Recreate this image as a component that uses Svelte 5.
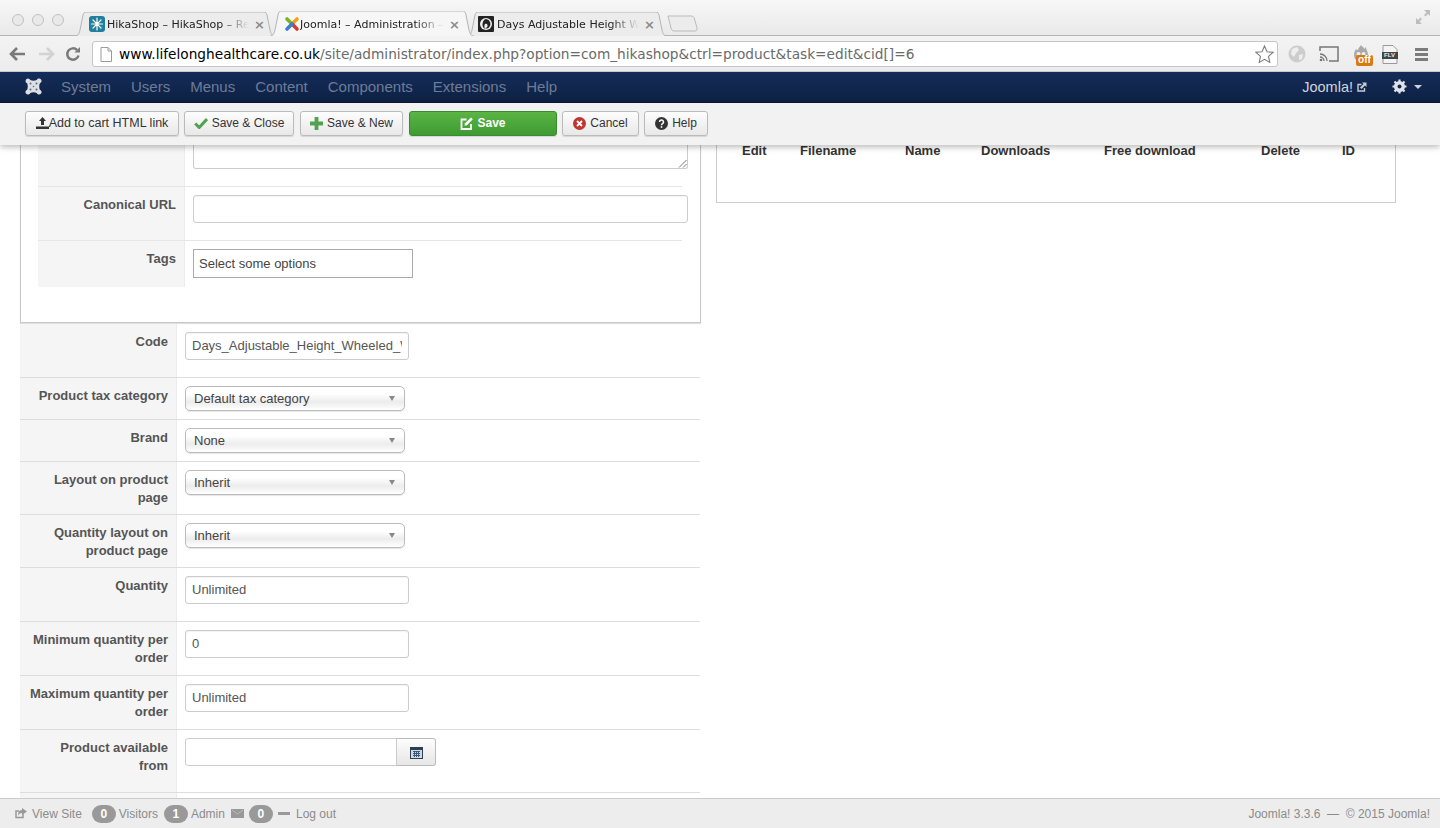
<script lang="ts">
  const navItems = ["System", "Users", "Menus", "Content", "Components", "Extensions", "Help"];

  const innerRows = [
    { label: "", kind: "textarea" },
    { label: "Canonical URL", kind: "text" },
    { label: "Tags", kind: "tags" },
  ];

  const rows = [
    { label: "Code", kind: "input", value: "Days_Adjustable_Height_Wheeled_Walker", cls: "h54" },
    { label: "Product tax category", kind: "select", value: "Default tax category", cls: "h42" },
    { label: "Brand", kind: "select", value: "None", cls: "h42" },
    { label: "Layout on product page", kind: "select", value: "Inherit", cls: "h53" },
    { label: "Quantity layout on product page", kind: "select", value: "Inherit", cls: "h53" },
    { label: "Quantity", kind: "input", value: "Unlimited", cls: "h54" },
    { label: "Minimum quantity per order", kind: "input", value: "0", cls: "h54" },
    { label: "Maximum quantity per order", kind: "input", value: "Unlimited", cls: "h54" },
    { label: "Product available from", kind: "date", value: "", cls: "h63" },
    { label: "", kind: "none", value: "", cls: "h54" },
  ];

  const columns = ["Edit", "Filename", "Name", "Downloads", "Free download", "Delete", "ID"];

  const tabPath = "M0 24 C3 24 4 22 5 18 L8 3 C8.500 1 9.500 0 11 0 L189 0 C190.500 0 191.500 1 192 3 L195 18 C196 22 197 24 200 24";
</script>

<div class="app">
  <header class="browser">
    <div class="tabstrip">
      <div class="lights"><i></i><i></i><i></i></div>

      <div class="tab first">
        <svg class="tab-shape" viewBox="0 0 200 24" preserveAspectRatio="none"><path d={tabPath} fill="#ececec" stroke="#b4b4b4" vector-effect="non-scaling-stroke"/></svg>
        <svg class="favicon" viewBox="0 0 16 16">
          <rect width="16" height="16" rx="3" fill="#1f7f9c"/>
          <path d="M8 2v12M2.500 8h11M4 4l8 8M12 4l-8 8" stroke="#fff" stroke-width="1.200" stroke-linecap="round"/>
        </svg>
        <span class="tab-title">HikaShop – HikaShop – Report</span>
        <span class="tab-x">×</span>
      </div>

      <div class="tab active">
        <svg class="tab-shape" viewBox="0 0 200 24" preserveAspectRatio="none"><path d={tabPath} fill="#f6f6f6" stroke="#b4b4b4" vector-effect="non-scaling-stroke"/></svg>
        <svg class="favicon" viewBox="0 0 16 16">
          <path d="M3 3l5 5" stroke="#7ab51d" stroke-width="3.600" stroke-linecap="round"/>
          <path d="M13 3l-5 5" stroke="#f2a01d" stroke-width="3.600" stroke-linecap="round"/>
          <path d="M13 13l-5-5" stroke="#d63b2f" stroke-width="3.600" stroke-linecap="round"/>
          <path d="M3 13l5-5" stroke="#3a7fd1" stroke-width="3.600" stroke-linecap="round"/>
        </svg>
        <span class="tab-title">Joomla! – Administration – Hika</span>
        <span class="tab-x">×</span>
      </div>

      <div class="tab third">
        <svg class="tab-shape" viewBox="0 0 200 24" preserveAspectRatio="none"><path d={tabPath} fill="#ececec" stroke="#b4b4b4" vector-effect="non-scaling-stroke"/></svg>
        <svg class="favicon" viewBox="0 0 16 16">
          <rect width="16" height="16" rx="1" fill="#222"/>
          <circle cx="8" cy="8" r="6" fill="#eee"/>
          <path d="M8 3a5 5 0 0 1 3 8.500c-1 1-3 1.500-4 .5 2 0 3-1.500 2.500-3S7 7 6.500 9 7 13 7 13 4 11 4.500 8 6 3.500 8 3z" fill="#222"/>
        </svg>
        <span class="tab-title">Days Adjustable Height Wheeled</span>
        <span class="tab-x">×</span>
      </div>

      <svg class="newtab" width="32" height="17" viewBox="0 0 32 17"><path d="M1 1 H24 C26 1 27 2 27.500 4 L30 13 C30.500 15 29.500 16 28 16 H7 C5.500 16 4.500 15 4 13 Z" fill="#ececec" stroke="#bbb"/></svg>

      <svg class="expand" width="16" height="16" viewBox="0 0 16 16">
        <path d="M9 1h6v6l-2-2-2.500 2.500-1.500-1.500L11.500 3.500zM7 15H1V9l2 2 2.500-2.500 1.500 1.500L4.500 12.500z" fill="#bdbdbd"/>
      </svg>
    </div>

    <div class="omnirow">
      <div class="nav-btns">
        <svg width="18" height="16" viewBox="0 0 18 16"><path d="M8 2L2 8l6 6M2.500 8H16" fill="none" stroke="#7a7a7a" stroke-width="2.600"/></svg>
        <svg width="18" height="16" viewBox="0 0 18 16"><path d="M10 2l6 6-6 6M15.500 8H2" fill="none" stroke="#d2d2d2" stroke-width="2.600"/></svg>
        <svg width="16" height="16" viewBox="0 0 16 16"><path d="M13.500 9.500A5.700 5.700 0 1 1 12 4" fill="none" stroke="#7a7a7a" stroke-width="2.500"/><path d="M9.500 6.500H15V1z" fill="#7a7a7a"/></svg>
      </div>
      <div class="omnibox">
        <svg class="page-icon" width="12" height="15" viewBox="0 0 12 15"><path d="M1 .5h7l3.500 3.500v10.500H1zM8 .5V4h3.500" fill="#fff" stroke="#9a9a9a"/></svg>
        <span class="url"><b>www.lifelonghealthcare.co.uk</b>/site/administrator/index.php?option=com_hikashop&amp;ctrl=product&amp;task=edit&amp;cid[]=6</span>
        <svg class="star" width="19" height="18" viewBox="0 0 19 18"><path d="M9.500 1l2.500 5.700 6 .6-4.500 4.100 1.300 6-5.300-3.100-5.300 3.100 1.300-6L1 7.300l6-.6z" fill="#fff" stroke="#7d7d7d" stroke-width="1.100"/></svg>
      </div>
      <div class="exts">
        <svg class="globe" width="18" height="18" viewBox="0 0 18 18"><circle cx="9" cy="9" r="8.500" fill="#cdcdcd"/><path d="M4 4l5-2 2 3-3 3-2 4-3-3zM11 10l4-1-1 5-3 1z" fill="#eee"/></svg>
        <svg class="cast" width="20" height="16" viewBox="0 0 20 16"><path d="M1 5V1h18v14h-9" fill="none" stroke="#777" stroke-width="1.500"/><path d="M1 8a7 7 0 0 1 7 7M1 11a4 4 0 0 1 4 4" fill="none" stroke="#777" stroke-width="1.300"/><circle cx="2" cy="14" r="1.300" fill="#777"/></svg>
        <span class="ext-flame">
          <svg width="20" height="20" viewBox="0 0 20 20"><path d="M10 1c1 2 3 2 3 4 1-1 1-1 2-2 0 3 2 4 2 8a7 7 0 0 1-14 0c0-3 1-4 2-6 1 1 1 1 2 1 0-2 2-3 3-5z" fill="#a9a9a9"/><circle cx="7.500" cy="10" r="2" fill="#eee"/><circle cx="12.500" cy="10" r="2" fill="#eee"/></svg>
          <span class="off">off</span>
        </span>
        <span class="flv">
          <svg width="16" height="19" viewBox="0 0 16 19"><path d="M1 .5h10l4 4v14H1z" fill="#f4f4f4" stroke="#999"/><rect x="0" y="7" width="16" height="7" fill="#444"/></svg>
          <span class="flv-label">FLV</span>
        </span>
        <span class="burger"><i></i><i></i><i></i></span>
      </div>
    </div>
  </header>

  <nav class="navbar">
    <svg class="joomla-logo" width="17" height="17" viewBox="0 0 17 17">
      <path d="M3 .5a2.500 2.500 0 0 1 2.300 1.600C7.300 3 9.700 3 11.700 2.100a2.500 2.500 0 1 1 3.200 3.200C14 7.300 14 9.700 14.900 11.700a2.500 2.500 0 1 1-3.200 3.200C9.700 14 7.300 14 5.300 14.900a2.500 2.500 0 1 1-3.200-3.200C3 9.700 3 7.300 2.100 5.300A2.500 2.500 0 0 1 3 .5z" fill="#dcdfe4"/>
      <g fill="#5d6a80">
        <circle cx="5.500" cy="5.500" r="1"/><circle cx="11.500" cy="5.500" r="1"/><circle cx="5.500" cy="11.500" r="1"/><circle cx="11.500" cy="11.500" r="1"/><circle cx="8.500" cy="8.500" r=".8"/>
      </g>
    </svg>
    <ul class="menu">
      {#each navItems as item}
        <li>{item}</li>
      {/each}
    </ul>
    <div class="nav-right">
      <span class="site-link">Joomla!
        <svg width="10" height="10" viewBox="0 0 10 10"><path d="M7.500 6v3H1V2.500h3.500" fill="none" stroke="#c6ccd6" stroke-width="1.400"/><path d="M5 .5h4.500V5L8 3.500 4.500 7 3 5.500 6.500 2z" fill="#c6ccd6"/></svg>
      </span>
      <svg class="gear" width="15" height="15" viewBox="0 0 15 15"><circle cx="7.500" cy="7.500" r="4" fill="none" stroke="#dfe3ea" stroke-width="3"/><path d="M7.500 .5v14M.5 7.500h14M2.500 2.500l10 10M12.500 2.500l-10 10" stroke="#dfe3ea" stroke-width="2.200"/><circle cx="7.500" cy="7.500" r="2" fill="#12284f"/></svg>
      <span class="caret"></span>
    </div>
  </nav>

  <div class="toolbar">
    <button class="btn add">
      <svg width="13" height="12" viewBox="0 0 13 12"><path d="M6.500 0l3.500 4H8v4H5V4H3zM0 9.500h13V12H0z" fill="#333"/></svg>Add to cart HTML link
    </button>
    <button class="btn close">
      <svg width="14" height="12" viewBox="0 0 14 12"><path d="M1.200 6.500l4 4L13 2" fill="none" stroke="#51a351" stroke-width="3"/></svg>Save &amp; Close
    </button>
    <button class="btn new">
      <svg width="13" height="13" viewBox="0 0 13 13"><path d="M6.500 0v13M0 6.500h13" stroke="#51a351" stroke-width="3.800"/></svg>Save &amp; New
    </button>
    <button class="btn save">
      <svg width="13" height="13" viewBox="0 0 13 13"><path d="M6.500 2.500H1.500v9.500H11V7" fill="none" stroke="#fff" stroke-width="1.800"/><path d="M11 .5l1.800 1.800L7 8.200l-2.500.5.500-2.500z" fill="#fff"/></svg>Save
    </button>
    <button class="btn cancel">
      <svg width="13" height="13" viewBox="0 0 13 13"><circle cx="6.500" cy="6.500" r="6.500" fill="#bd362f"/><path d="M4 4l5 5M9 4l-5 5" stroke="#fff" stroke-width="1.800"/></svg>Cancel
    </button>
    <button class="btn help">
      <svg width="13" height="13" viewBox="0 0 13 13"><circle cx="6.500" cy="6.500" r="6.500" fill="#333"/><path d="M4.500 5a2 2 0 1 1 3 1.700c-.7.400-1 .8-1 1.500" fill="none" stroke="#fff" stroke-width="1.500"/><rect x="5.700" y="9.200" width="1.600" height="1.600" fill="#fff"/></svg>Help
    </button>
  </div>

  <main class="content">
    <section class="left">
      <div class="panel">
        {#each innerRows as row}
          <div class="inner-row {row.kind}">
            <div class="cell-label">{row.label}</div>
            <div class="cell-value">
              {#if row.kind === "textarea"}
                <div class="fake-textarea">
                  <svg width="9" height="9" viewBox="0 0 9 9"><path d="M8.500 1L1 8.500M8.500 5L5 8.500" stroke="#777"/></svg>
                </div>
              {:else if row.kind === "text"}
                <div class="fake-input wide"></div>
              {:else}
                <div class="tags-box">Select some options</div>
              {/if}
            </div>
          </div>
        {/each}
      </div>

      {#each rows as row}
        <div class="row {row.cls}">
          <div class="label">{row.label}</div>
          <div class="value">
            {#if row.kind === "input"}
              <div class="fake-input field"><span>{row.value}</span></div>
            {:else if row.kind === "select"}
              <div class="select"><span>{row.value}</span><i class="arrow"></i></div>
            {:else if row.kind === "date"}
              <div class="date">
                <div class="date-input"></div>
                <div class="date-btn">
                  <svg width="13" height="13" viewBox="0 0 13 13"><rect y="1" width="13" height="12" fill="#2d3f55"/><rect x="1" y="4" width="11" height="8" fill="#cfd8e2"/><path d="M3 5.500h7M3 7.500h7M3 9.500h7M4.500 5v6M6.500 5v6M8.500 5v6" stroke="#3b5878"/></svg>
                </div>
              </div>
            {/if}
          </div>
        </div>
      {/each}
    </section>

    <section class="right">
      <div class="files">
        <div class="files-head">
          {#each columns as col}
            <span>{col}</span>
          {/each}
        </div>
      </div>
    </section>
  </main>

  <footer class="status">
    <svg width="12" height="11" viewBox="0 0 12 11"><path d="M8 6v3.500H1V3h3" fill="none" stroke="#999" stroke-width="1.500"/><path d="M7 0l5 3.500L7 7V5C5 5 4 6 3 7.500 3 5 4 2 7 2z" fill="#999"/></svg>
    <span class="view">View Site</span>
    <span class="badge first-badge">0</span><span>Visitors</span>
    <span class="badge">1</span><span>Admin</span>
    <svg width="13" height="9" viewBox="0 0 13 9"><rect width="13" height="9" fill="#999"/><path d="M1 1l5.500 4L12 1" fill="none" stroke="#bbb"/></svg>
    <span class="badge">0</span>
    <i class="minus"></i>
    <span>Log out</span>
    <span class="copy">Joomla! 3.3.6 &nbsp;— &nbsp;© 2015 Joomla!</span>
  </footer>
</div>

<style>
  :global(body) {
    margin: 0;
    background: #fff;
  }

  .app {
    height: 828px;
    display: flex;
    flex-direction: column;
    overflow: hidden;
    font-family: "Liberation Sans", Arial, sans-serif;
    font-size: 13px;
    color: #333;
  }

  /* browser chrome */
  .browser {
    flex: none;
    height: 72px;
    background: linear-gradient(#f7f7f7, #e9e9e9 36px, #f3f3f3 36px, #ececec);
  }

  .tabstrip {
    height: 36px;
    box-sizing: border-box;
    border-bottom: 1px solid #b6b6b6;
    display: flex;
    align-items: flex-end;
    position: relative;
  }

  .lights {
    display: flex;
    gap: 8px;
    width: 75px;
    flex: none;
    box-sizing: border-box;
    padding: 0 0 0 12px;
    align-self: flex-start;
    margin-top: 14px;
  }

  .lights i {
    width: 12px;
    height: 12px;
    box-sizing: border-box;
    border: 1px solid #c0c0c0;
    border-radius: 50%;
    background: #e9e9e9;
  }

  .tab {
    height: 24px;
    margin-bottom: -1px;
    position: relative;
    display: flex;
    align-items: center;
    font-family: "DejaVu Sans", sans-serif;
    font-size: 11px;
    color: #222;
    box-sizing: border-box;
    padding-left: 14px;
    flex: none;
  }

  .tab.first {
    width: 200px;
  }

  .tab.active {
    width: 204px;
    margin-left: -5px;
    z-index: 2;
    height: 25px;
    padding-top: 1px;
  }

  .tab.active .favicon {
    margin-right: 0;
  }

  .tab.active .tab-title {
    width: 144px;
  }

  .tab.third {
    width: 200px;
    margin-left: -7px;
    padding-left: 11px;
  }

  .tab.third .favicon {
    margin-right: 3px;
  }

  .tab-shape {
    position: absolute;
    inset: 0;
    width: 100%;
    height: 100%;
  }

  .favicon {
    position: relative;
    flex: none;
    width: 16px;
    height: 16px;
    margin-right: 2px;
  }

  .tab-title {
    position: relative;
    width: 142px;
    white-space: nowrap;
    overflow: hidden;
    -webkit-mask-image: linear-gradient(90deg, #000 80%, transparent);
    mask-image: linear-gradient(90deg, #000 80%, transparent);
  }

  .tab-x {
    position: relative;
    margin-left: 5px;
    font-size: 13px;
    font-weight: bold;
    color: #8a8a8a;
    line-height: 1;
  }

  .newtab {
    margin: 0 0 3px 0;
    flex: none;
  }

  .expand {
    position: absolute;
    right: 9px;
    top: 9px;
  }

  .omnirow {
    height: 36px;
    display: flex;
    align-items: center;
    border-bottom: 1px solid #c8c8c8;
    box-sizing: border-box;
    padding-top: 1px;
  }

  .nav-btns {
    width: 92px;
    flex: none;
    display: flex;
    align-items: center;
    gap: 10px;
    padding-left: 9px;
    box-sizing: border-box;
  }

  .omnibox {
    width: 1186px;
    height: 26px;
    box-sizing: border-box;
    background: #fff;
    border: 1px solid #c6c6c6;
    border-radius: 3px;
    display: flex;
    align-items: center;
    padding: 0 3px 0 7px;
    font-family: "DejaVu Sans", sans-serif;
    font-size: 13.700px;
    color: #6a6a6a;
  }

  .page-icon {
    flex: none;
    margin-right: 7px;
  }

  .url {
    flex: 1;
    white-space: nowrap;
  }

  .url b {
    font-weight: normal;
    color: #000;
  }

  .exts {
    flex: 1;
    display: flex;
    align-items: center;
    padding-left: 10px;
  }

  .cast {
    margin-left: 13px;
  }

  .ext-flame {
    position: relative;
    display: flex;
    margin-left: 12px;
  }

  .off {
    position: absolute;
    left: 5px;
    top: 11px;
    width: 17px;
    height: 11px;
    background: #d97a10;
    border-radius: 2px;
    color: #fff;
    font-size: 10px;
    font-weight: bold;
    line-height: 10px;
    text-align: center;
  }

  .flv {
    position: relative;
    display: flex;
    margin-left: 11px;
  }

  .flv-label {
    position: absolute;
    left: 2px;
    top: 7px;
    font-size: 6px;
    font-weight: bold;
    line-height: 7px;
    color: #eee;
  }

  .burger {
    display: flex;
    flex-direction: column;
    gap: 2px;
    margin-left: 17px;
  }

  .burger i {
    width: 13px;
    height: 3px;
    background: #7c7c7c;
  }

  /* joomla navbar */
  .navbar {
    flex: none;
    height: 31px;
    background: linear-gradient(#142c59, #0e2143);
    display: flex;
    align-items: center;
    padding: 0 18px 1px 25px;
    border-bottom: 1px solid #0b1a35;
    box-sizing: border-box;
  }

  .joomla-logo {
    flex: none;
    margin-right: 19px;
  }

  .menu {
    list-style: none;
    display: flex;
    gap: 20px;
    margin: 0;
    padding: 0;
    font-size: 15px;
    color: #6d7c96;
  }

  .nav-right {
    margin-left: auto;
    display: flex;
    align-items: center;
    color: #cfd4dc;
    font-size: 14.500px;
  }

  .site-link {
    display: flex;
    align-items: center;
    gap: 4px;
    margin-right: 25px;
  }

  .gear {
    margin-right: 7px;
  }

  .caret {
    border: 4px solid transparent;
    border-top-color: #cfd4dc;
    border-bottom: 0;
  }

  /* action bar */
  .toolbar {
    flex: none;
    height: 42px;
    background: #f2f2f2;
    box-shadow: 0 2px 6px rgba(0, 0, 0, 0.28);
    display: flex;
    align-items: center;
    gap: 5px;
    padding: 0 0 2px 25px;
    box-sizing: border-box;
    position: relative;
    z-index: 3;
  }

  .btn {
    height: 25px;
    box-sizing: border-box;
    display: flex;
    align-items: center;
    justify-content: center;
    gap: 4px;
    padding: 0;
    border: 1px solid #bbb;
    border-radius: 3px;
    background: linear-gradient(#fdfdfd, #e8e8e8);
    box-shadow: 0 1px 1px rgba(0, 0, 0, 0.12);
    font: 12.500px "Liberation Sans", Arial, sans-serif;
    color: #333;
  }

  .add {
    width: 154px;
    gap: 0;
  }

  .close {
    width: 110px;
    font-size: 12px;
    gap: 4px;
  }

  .new {
    width: 103px;
    margin-left: 1px;
    font-size: 12px;
  }

  .save {
    width: 148px;
    margin-left: 1px;
    background: linear-gradient(#5ab544, #3f9a33);
    border-color: #3a8a2f;
    color: #fff;
    font-weight: bold;
    font-size: 12px;
    gap: 4px;
  }

  .cancel {
    width: 77px;
    font-size: 12px;
  }

  .help {
    width: 64px;
    font-size: 12px;
  }

  /* content */
  .content {
    flex: 1;
    min-height: 0;
    overflow: hidden;
    display: flex;
    gap: 15px;
    padding-left: 20px;
  }

  .left {
    width: 681px;
    flex: none;
  }

  .panel {
    border: 1px solid #c8c8c8;
    border-top: 0;
    box-shadow: 0 1px 1px rgba(0, 0, 0, 0.12);
    padding: 0 0 0 17px;
    margin-bottom: 1px;
    box-sizing: border-box;
    height: 178px;
  }

  .inner-row {
    display: flex;
    width: 644px;
    border-bottom: 1px solid #e6e6e6;
    box-sizing: border-box;
  }

  .inner-row.textarea {
    height: 42px;
  }

  .inner-row.text {
    height: 54px;
  }

  .inner-row.tags {
    height: 46px;
    border-bottom: 0;
  }

  .cell-label {
    width: 147px;
    flex: none;
    box-sizing: border-box;
    background: #f5f5f5;
    border-right: 1px solid #ececec;
    text-align: right;
    padding: 9px 8px 0 0;
    font-weight: bold;
    line-height: 18px;
    color: #555;
  }

  .cell-value {
    padding: 8px 0 0 8px;
    width: 503px;
    flex: none;
    box-sizing: border-box;
  }

  .textarea .cell-value {
    padding-top: 0;
  }

  .fake-textarea {
    height: 24px;
    width: 495px;
    box-sizing: border-box;
    border: 1px solid #ccc;
    border-top: 0;
    border-radius: 0 0 3px 3px;
    display: flex;
    align-items: flex-end;
    justify-content: flex-end;
    background: #fff;
  }

  .fake-input {
    box-sizing: border-box;
    border: 1px solid #ccc;
    border-radius: 3px;
    background: #fff;
    box-shadow: inset 0 1px 1px rgba(0, 0, 0, 0.05);
  }

  .fake-input.wide {
    width: 495px;
    height: 28px;
  }

  .tags-box {
    width: 220px;
    height: 29px;
    box-sizing: border-box;
    border: 1px solid #aaa;
    padding: 0 5px;
    line-height: 27px;
    color: #444;
    background: #fff;
  }

  .row {
    display: flex;
    width: 680px;
    border-bottom: 1px solid #ddd;
    box-sizing: border-box;
  }

  .h42 {
    height: 42px;
  }

  .h53 {
    height: 53px;
  }

  .h54 {
    height: 54px;
  }

  .h63 {
    height: 63px;
  }

  .label {
    width: 157px;
    flex: none;
    box-sizing: border-box;
    background: #f5f5f5;
    border-right: 1px solid #ececec;
    text-align: right;
    padding: 9px 8px 0 10px;
    font-weight: bold;
    line-height: 18px;
    color: #555;
  }

  .value {
    padding: 8px 0 0 8px;
  }

  .field {
    width: 224px;
    height: 28px;
    padding: 0 6px;
    line-height: 26px;
    color: #555;
  }

  .field span {
    display: block;
    white-space: nowrap;
    overflow: hidden;
  }

  .select {
    width: 220px;
    height: 25px;
    box-sizing: border-box;
    border: 1px solid #bbb;
    border-radius: 5px;
    background: linear-gradient(#fff, #fff 30%, #ececec 65%, #fff);
    box-shadow: 0 1px 1px rgba(0, 0, 0, 0.1);
    padding: 0 9px 0 8px;
    display: flex;
    align-items: center;
    justify-content: space-between;
    color: #444;
  }

  .arrow {
    border: 3.500px solid transparent;
    border-top: 5px solid #888;
    border-bottom: 0;
  }

  .date {
    display: flex;
    width: 251px;
    height: 28px;
  }

  .date-input {
    flex: 1;
    box-sizing: border-box;
    border: 1px solid #ccc;
    border-radius: 3px 0 0 3px;
    background: #fff;
  }

  .date-btn {
    width: 40px;
    box-sizing: border-box;
    border: 1px solid #bbb;
    border-left-color: #ccc;
    border-radius: 0 3px 3px 0;
    background: linear-gradient(#fdfdfd, #e6e6e6);
    display: flex;
    align-items: center;
    justify-content: center;
    margin-left: -1px;
  }

  .right {
    width: 680px;
    flex: none;
  }

  .files {
    height: 58px;
    box-sizing: border-box;
    border: 1px solid #ccc;
    border-top: 0;
    padding: 0 0 0 25px;
  }

  .files-head {
    display: grid;
    grid-template-columns: 58px 105px 76px 123px 157px 81px auto;
    font-weight: bold;
    line-height: 11px;
    color: #333;
  }

  /* footer */
  .status {
    flex: none;
    height: 30px;
    box-sizing: border-box;
    background: #ededed;
    border-top: 1px solid #ccc;
    display: flex;
    align-items: center;
    padding: 0 10px 0 15px;
    font-size: 12px;
    color: #8b8b8b;
    position: relative;
    z-index: 3;
  }

  .view {
    margin: 0 10px 0 5px;
  }

  .badge {
    min-width: 24px;
    height: 18px;
    line-height: 18px;
    border-radius: 9px;
    background: #999;
    color: #fff;
    font-weight: bold;
    text-align: center;
    margin: 0 3px 0 0;
  }

  .status span:not(.badge):not(.view):not(.copy) {
    margin-right: 6px;
  }

  .status svg:nth-of-type(2) {
    margin-right: 5px;
  }

  .minus {
    width: 12px;
    height: 3px;
    background: #999;
    margin: 0 6px 0 2px;
  }

  .copy {
    margin-left: auto;
  }
</style>
